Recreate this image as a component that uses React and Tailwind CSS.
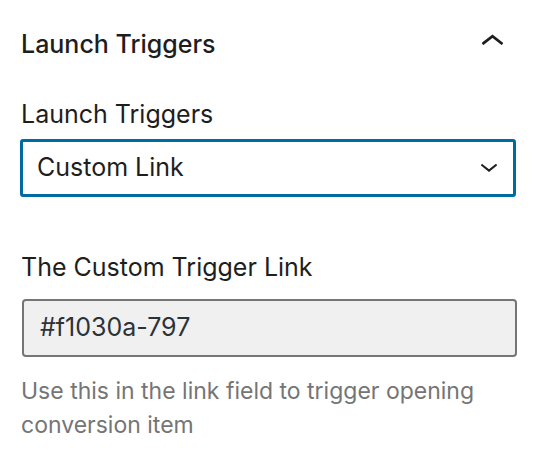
import React from "react";

function Chevron({ up = false, className = "" }) {
  return (
    <svg viewBox="0 0 20 10" className={className} fill="none" stroke="currentColor" strokeWidth="2.6" strokeLinecap="square">
      {up ? <polyline points="1.5,8.5 10,1.8 18.5,8.5" /> : <polyline points="1.5,1.5 10,8.2 18.5,1.5" />}
    </svg>
  );
}

export default function App() {
  return (
    <div className="w-[546px] h-[469px] bg-white text-[#1e1e1e] font-['Inter','Liberation_Sans',sans-serif] antialiased">
      <div className="pl-[20px] pr-[30px] pt-[28px]">
        {/* panel header */}
        <div className="flex items-center justify-between h-[32px]">
          <h2 className="text-[25px] leading-[32px] font-medium pl-[1px]">Launch Triggers</h2>
          <Chevron up className="w-[21px] h-[11px] mr-[13px] mb-[9px]" />
        </div>

        {/* select */}
        <label className="block mt-[38px] text-[25px] leading-[32px] pl-[1px]">Launch Triggers</label>
        <div className="mt-[9px] h-[58px] border-[3px] border-[#006ba1] rounded-[3px] flex items-center justify-between pl-[14px] pr-[16px]">
          <span className="text-[25px]">Custom Link</span>
          <Chevron className="w-[16px] h-[8px]" />
        </div>

        {/* trigger link */}
        <label className="block mt-[54px] text-[25px] leading-[32px] pl-[1px]">The Custom Trigger Link</label>
        <div className="mt-[16px] ml-[2px] mr-[-1px] h-[58px] border-2 border-[#757575] rounded-[4px] bg-[#f0f0f0] flex items-center pl-[16px]">
          <span className="text-[25px] text-[#2c3338]">#f1030a-797</span>
        </div>
        <p className="mt-[17px] text-[23px] leading-[34px] text-[#757575] pl-[1px]">
          Use this in the link field to trigger opening conversion item
        </p>
      </div>
    </div>
  );
}
